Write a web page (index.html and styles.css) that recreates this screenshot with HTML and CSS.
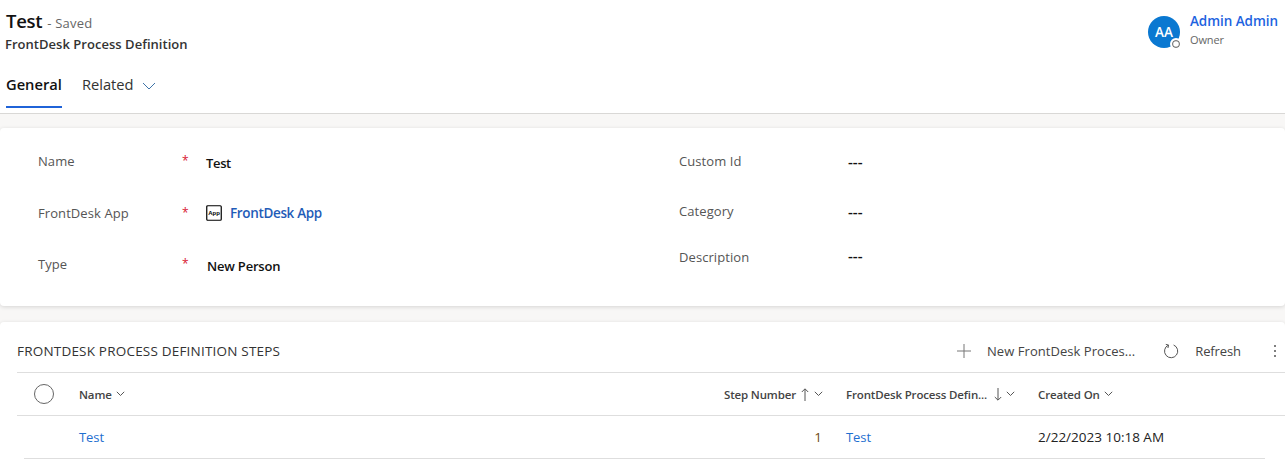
FILE: index.html
```html
<!DOCTYPE html>
<html lang="en">
<head>
<meta charset="utf-8">
<title>Test - Saved</title>
<link rel="stylesheet" href="styles.css">
</head>
<body>
<header class="header">
  <div class="head-top">
    <div class="title-block">
      <div class="title-line"><span class="title">Test</span><span class="saved">- Saved</span></div>
      <div class="entity">FrontDesk Process Definition</div>
    </div>
    <div class="owner">
      <div class="avatar">AA<span class="presence"></span></div>
      <div class="owner-text">
        <a class="owner-name">Admin Admin</a>
        <span class="owner-role">Owner</span>
      </div>
    </div>
  </div>
  <nav class="tabs">
    <span class="tab active">General</span>
    <span class="tab">Related<svg class="tab-chev" width="14" height="8" viewBox="0 0 14 8"><path d="M1 1l6 6 6-6" fill="none" stroke="#3f74a8" stroke-width="1"/></svg></span>
  </nav>
</header>
<main class="content">
  <section class="card form">
    <div class="form-col">
      <div class="field f-name"><span class="label">Name</span><span class="req">*</span><span class="value strong">Test</span></div>
      <div class="field f-app"><span class="label">FrontDesk App</span><span class="req">*</span>
        <span class="value lookup">
          <svg class="app-icon" width="16" height="16" viewBox="0 0 16 16"><rect x=".75" y=".75" width="14.5" height="14.5" rx="1" fill="#fff" stroke="#000" stroke-width="1.2"/><text x="8" y="10.3" class="app-text" text-anchor="middle">App</text></svg>
          <a class="lookup-link">FrontDesk App</a>
        </span>
      </div>
      <div class="field f-type"><span class="label">Type</span><span class="req">*</span><span class="value strong">New Person</span></div>
    </div>
    <div class="form-col right">
      <div class="field r-one"><span class="label">Custom Id</span><span class="value strong dash">---</span></div>
      <div class="field r-two"><span class="label">Category</span><span class="value strong dash">---</span></div>
      <div class="field r-three"><span class="label">Description</span><span class="value strong dash">---</span></div>
    </div>
  </section>
  <section class="card grid-card">
    <div class="grid-bar">
      <h2 class="grid-title">FRONTDESK PROCESS DEFINITION STEPS</h2>
      <div class="commands">
        <span class="cmd cmd-new"><svg width="16" height="16" viewBox="0 0 16 16"><path d="M8 1v14M1 8h14" stroke="#777" stroke-width="1" fill="none"/></svg><span>New FrontDesk Proces...</span></span>
        <span class="cmd cmd-refresh"><svg width="16" height="16" viewBox="0 0 16 16"><path d="M5.2 2.2A6.6 6.6 0 1 0 10.6 2" stroke="#555" stroke-width="1" fill="none"/><path d="M2.8 1.4l2.8.7-.7 2.9" stroke="#555" stroke-width="1" fill="none"/></svg><span>Refresh</span></span>
        <span class="more"><i></i><i></i><i></i></span>
      </div>
    </div>
    <div class="row head-row">
      <span class="cell c-check"><span class="radio"></span></span>
      <span class="cell c-name"><span>Name</span><svg class="chev" width="9" height="6" viewBox="0 0 9 6"><path d="M.8.8l3.7 3.7L8.2.8" fill="none" stroke="#555"/></svg></span>
      <span class="cell c-step"><span>Step Number</span><svg class="arrow" width="8" height="13" viewBox="0 0 8 13"><path d="M4 13V1M.8 4L4 .8 7.2 4" fill="none" stroke="#555"/></svg><svg class="chev" width="9" height="6" viewBox="0 0 9 6"><path d="M.8.8l3.7 3.7L8.2.8" fill="none" stroke="#555"/></svg></span>
      <span class="cell c-def"><span>FrontDesk Process Defin...</span><svg class="arrow down" width="8" height="13" viewBox="0 0 8 13"><path d="M4 0v12M.8 9L4 12.2 7.2 9" fill="none" stroke="#555"/></svg><svg class="chev" width="9" height="6" viewBox="0 0 9 6"><path d="M.8.8l3.7 3.7L8.2.8" fill="none" stroke="#555"/></svg></span>
      <span class="cell c-date"><span>Created On</span><svg class="chev" width="9" height="6" viewBox="0 0 9 6"><path d="M.8.8l3.7 3.7L8.2.8" fill="none" stroke="#555"/></svg></span>
    </div>
    <div class="row data-row">
      <span class="cell c-check"></span>
      <span class="cell c-name"><a class="link">Test</a></span>
      <span class="cell c-step num">1</span>
      <span class="cell c-def"><a class="link">Test</a></span>
      <span class="cell c-date">2/22/2023 10:18 AM</span>
    </div>
  </section>
</main>
</body>
</html>
```
FILE: styles.css
```css
* { box-sizing: border-box; }
html, body { margin: 0; height: 100%; overflow: hidden; }
body {
  font-family: "Open Sans", "Noto Sans", sans-serif;
  background: #f8f7f6;
  color: #111;
  font-size: 13px;
}
.header {
  height: 114px;
  background: #fff;
  border-bottom: 1px solid #d9d8d6;
  padding: 0 5px;
  display: flex;
  flex-direction: column;
}
.head-top { display: flex; justify-content: space-between; height: 66px; }
.title-block { padding-top: 8px; }
.title-line { display: flex; align-items: baseline; height: 27px; }
.title { font-size: 18.5px; font-weight: 600; color: #111; letter-spacing: -.3px; padding-left: 1px; }
.saved { font-size: 13px; color: #666; margin-left: 5px; letter-spacing: .2px; }
.entity { font-size: 13px; font-weight: 600; color: #333; line-height: 19px; letter-spacing: .03px; }
.owner { display: flex; gap: 10px; padding: 16px 2px 0 0; }
.avatar {
  position: relative;
  width: 32px; height: 32px;
  border-radius: 50%;
  background: #0a78d1;
  color: #fff;
  font-weight: 600;
  font-size: 13.5px;
  display: flex; align-items: center; justify-content: center;
}
.presence {
  position: absolute; right: -2px; bottom: -2px;
  width: 12px; height: 12px;
  border-radius: 50%;
  background: #fff;
  border: 2px solid #fff;
  box-shadow: inset 0 0 0 1.2px #777;
}
.owner-text { display: flex; flex-direction: column; margin-top: -1px; }
.owner-name { color: #1d63e0; font-weight: 600; font-size: 13.5px; line-height: 13px; letter-spacing: -.05px; }
.owner-role { color: #666; font-size: 11px; line-height: 16px; margin-top: 4px; letter-spacing: -.1px; }
.tabs { display: flex; gap: 20px; padding-left: 1px; height: 42px; }
.tab { font-size: 14.7px; height: 42px; line-height: 37px; color: #333; display: flex; gap: 8px; align-items: flex-start; }
.tab.active { font-weight: 600; color: #111; border-bottom: 2px solid #1f63d8; }
.tab-chev { margin-top: 16px; }
.content { padding-top: 14px; display: flex; flex-direction: column; gap: 16px; }
.card { background: #fff; border-radius: 4px; box-shadow: 0 1px 4px rgba(0,0,0,.14); }
.form { height: 178px; display: grid; grid-template-columns: 641px 1fr; }
.form-col { padding-left: 38px; display: flex; flex-direction: column; }
.field { display: flex; align-items: flex-start; }
.label { width: 144px; color: #555; font-size: 13px; line-height: 18px; letter-spacing: .08px; }
.req { width: 24px; color: #d8182f; font-size: 12px; line-height: 16px; margin-top: 1px; }
.value { font-size: 13px; line-height: 18px; color: #111; }
.strong { font-weight: 600; letter-spacing: -.2px; }
.f-name { margin-top: 24px; }
.f-name .value { margin-top: 2px; letter-spacing: -.35px; }
.f-app { margin-top: 32px; }
.f-type { margin-top: 33px; }
.f-type .value { margin-top: 2px; margin-left: 1px; }
.lookup { display: flex; gap: 8px; align-items: center; }
.lookup-link { color: #1f5cb8; font-weight: 600; font-size: 13.5px; letter-spacing: -.35px; }
.app-text { font-size: 6px; font-weight: 700; fill: #000; font-family: "Liberation Sans", sans-serif; }
.right { padding-left: 38px; }
.right .label { width: 169px; }
.dash { font-size: 15px; letter-spacing: 0; }
.r-one { margin-top: 24px; }
.r-two { margin-top: 32px; }
.r-three { margin-top: 28px; }
.r-three .value { margin-top: -2px; }
.grid-card { padding-left: 17px; min-height: 160px; }
.grid-bar { height: 51px; padding-top: 8px; border-bottom: 1px solid #dedede; display: flex; justify-content: space-between; align-items: center; }
.grid-title { margin: 0; font-size: 13.5px; font-weight: 500; color: #333; letter-spacing: .2px; }
.commands { display: flex; align-items: center; }
.cmd { display: flex; align-items: center; gap: 15px; color: #444; font-size: 13px; }
.cmd-new { margin-right: 28px; }
.cmd-new span { letter-spacing: .05px; }
.cmd-refresh { margin-right: 33px; gap: 16px; }
.cmd-refresh span { letter-spacing: -.1px; }
.more { display: flex; flex-direction: column; gap: 3px; width: 2px; margin-right: 9px; }
.more i { width: 2px; height: 2px; background: #555; border-radius: 50%; }
.row { display: grid; grid-template-columns: 62px 645px 122px 192px 1fr; align-items: center; }
.head-row { height: 43px; border-bottom: 1px solid #dedede; font-weight: 600; font-size: 11.5px; color: #444; }
.data-row { height: 43px; margin-left: 7px; margin-right: 20px; grid-template-columns: 55px 645px 122px 192px 1fr; border-bottom: 1px solid #dedede; font-size: 13.5px; }
.cell { display: flex; align-items: center; gap: 4px; white-space: nowrap; }
.cell svg { flex-shrink: 0; }
.head-row .cell { letter-spacing: -.15px; }
.c-check { padding-left: 17px; }
.radio { width: 20px; height: 20px; border-radius: 50%; border: 1px solid #666; }
.c-step { justify-content: flex-end; padding-right: 23px; }
.arrow { margin: 0 1px; }
.arrow.down { margin: 0 0 0 3px; }
.num { color: #6e4a10; padding-right: 24px; }
.link { color: #1f6fd0; font-size: 13px; letter-spacing: -.08px; }
.c-date { color: #222; }
.head-row .c-date { color: #444; }
```
